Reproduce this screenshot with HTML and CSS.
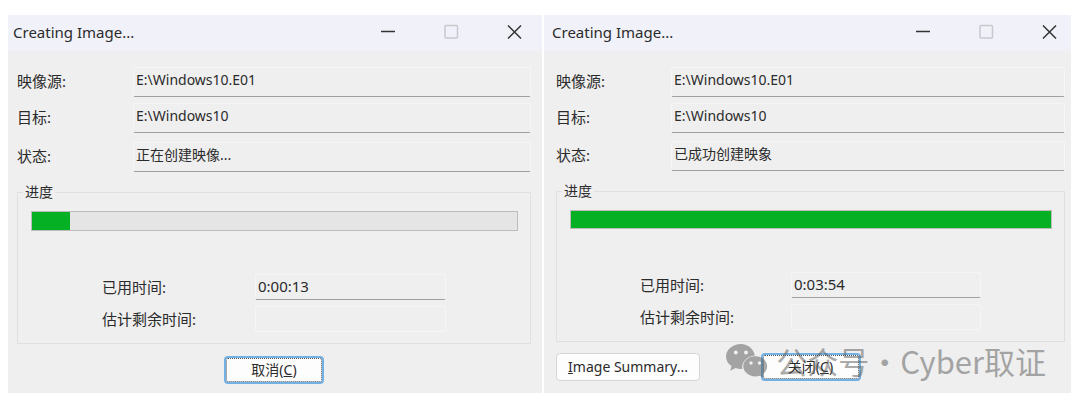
FILE: index.html
```html
<!DOCTYPE html>
<html lang="zh-CN">
<head>
<meta charset="utf-8">
<meta name="viewport" content="width=device-width, initial-scale=1">
<title>Creating Image...</title>
<link rel="stylesheet" href="styles.css">
</head>
<body>
<main class="desktop">
  <section class="window window-running">
    <header class="titlebar">
      <h1 class="title">Creating Image...</h1>
      <button class="control" type="button" aria-label="Minimize"><svg width="16" height="16" viewBox="0 0 16 16"><path d="M1 7.500H15" /></svg></button>
      <button class="control" type="button" aria-label="Maximize" disabled><svg width="16" height="16" viewBox="0 0 16 16"><rect x="2" y="1.500" width="12.500" height="12.500" rx="1" /></svg></button>
      <button class="control" type="button" aria-label="Close"><svg width="16" height="16" viewBox="0 0 16 16"><path d="M2 1.500L15 14.500M15 1.500L2 14.500" /></svg></button>
    </header>
    <form class="content">
      <div class="details">
        <label for="source-a">映像源:</label><input class="field" id="source-a" type="text" value="E:\Windows10.E01" readonly>
        <label for="target-a">目标:</label><input class="field" id="target-a" type="text" value="E:\Windows10" readonly>
        <label for="status-a">状态:</label><input class="field" id="status-a" type="text" value="正在创建映像..." readonly>
      </div>
      <fieldset class="group">
        <legend>进度</legend>
        <progress class="bar" value="78" max="1000" aria-label="进度"></progress>
        <div class="times">
          <label for="elapsed-a">已用时间:</label><input class="field time" id="elapsed-a" type="text" value="0:00:13" readonly>
          <label for="left-a">估计剩余时间:</label><input class="field time empty" id="left-a" type="text" value="" readonly>
        </div>
      </fieldset>
      <footer class="actions">
        <button class="push default" type="button">取消(<u>C</u>)</button>
      </footer>
    </form>
  </section>

  <section class="window window-done">
    <header class="titlebar">
      <h1 class="title">Creating Image...</h1>
      <button class="control" type="button" aria-label="Minimize"><svg width="16" height="16" viewBox="0 0 16 16"><path d="M1 7.500H15" /></svg></button>
      <button class="control" type="button" aria-label="Maximize" disabled><svg width="16" height="16" viewBox="0 0 16 16"><rect x="2" y="1.500" width="12.500" height="12.500" rx="1" /></svg></button>
      <button class="control" type="button" aria-label="Close"><svg width="16" height="16" viewBox="0 0 16 16"><path d="M2 1.500L15 14.500M15 1.500L2 14.500" /></svg></button>
    </header>
    <form class="content">
      <div class="details">
        <label for="source-b">映像源:</label><input class="field" id="source-b" type="text" value="E:\Windows10.E01" readonly>
        <label for="target-b">目标:</label><input class="field" id="target-b" type="text" value="E:\Windows10" readonly>
        <label for="status-b">状态:</label><input class="field" id="status-b" type="text" value="已成功创建映象" readonly>
      </div>
      <fieldset class="group">
        <legend>进度</legend>
        <progress class="bar" value="1000" max="1000" aria-label="进度"></progress>
        <div class="times">
          <label for="elapsed-b">已用时间:</label><input class="field time" id="elapsed-b" type="text" value="0:03:54" readonly>
          <label for="left-b">估计剩余时间:</label><input class="field time empty" id="left-b" type="text" value="" readonly>
        </div>
      </fieldset>
      <footer class="actions">
        <button class="push summary" type="button"><u>I</u>mage Summary...</button>
        <button class="push default" type="button">关闭(<u>C</u>)</button>
      </footer>
    </form>
    <div class="watermark">
      <svg class="chat" width="42" height="34" viewBox="0 0 42 34">
        <path fill-rule="evenodd" d="M15 0C6.700 0 0 5.600 0 12.500c0 3.900 2.100 7.300 5.500 9.600L4.300 26.800l5.300-2.800c1.700.600 3.500.900 5.400.900h1.300C15.300 18 21 12 28.800 11.400 27.700 5 22 0 15 0ZM9.800 6.500a2 2 0 1 1 0 4 2 2 0 0 1 0-4ZM20 6.500a2 2 0 1 1 0 4 2 2 0 0 1 0-4Z" />
        <path fill-rule="evenodd" d="M29.300 12.300C22.600 12.300 17.300 16.800 17.300 22.300S22.600 32.400 29.300 32.400c1.500 0 2.900-.200 4.200-.600l4.200 2-1-3.600c2.800-1.900 4.500-4.700 4.500-7.900 0-5.500-5.300-10-11.900-10ZM25 17.300a1.700 1.700 0 1 1 0 3.400 1.700 1.700 0 0 1 0-3.400ZM33.500 17.300a1.700 1.700 0 1 1 0 3.400 1.700 1.700 0 0 1 0-3.400Z" />
      </svg>
      <span>公众号</span><span class="dot">·</span><span>Cyber取证</span>
    </div>
  </section>
</main>
</body>
</html>
```
FILE: styles.css
```css
* {
  box-sizing: border-box;
}

body {
  margin: 0;
  background: #fff;
  color: #2b2b2b;
  font: 14px/20px "Noto Sans", "Noto Sans CJK SC", sans-serif;
}

.desktop {
  display: grid;
  grid-template-columns: 534fr 527fr;
  align-items: stretch;
  gap: 2px;
  padding: 15px 9px 13px 8px;
}

.window {
  position: relative;
  background: #efefef;
}

.window-running {
  --label-column: 116px;
  --edge-left: 9px;
  --edge-right: 11px;
  --controls-end: 7px;
  --status-row: 33px;
  --bar-height: 20px;
  --time-indent: 71px;
  --time-column: 153px;
  --time-width: 191px;
  --actions-gap: 12px;
}

.window-done {
  --label-column: 115px;
  --edge-left: 12px;
  --edge-right: 6px;
  --controls-end: 1px;
  --status-row: 32px;
  --bar-height: 19px;
  --time-indent: 70px;
  --time-column: 151px;
  --time-width: 190px;
  --actions-gap: 11px;
}

.titlebar {
  display: flex;
  align-items: center;
  gap: 21px;
  height: 36px;
  padding: 0 var(--controls-end) 2px 5px;
  background: #f1f2f9;
}

.window-done .titlebar {
  padding-left: 8px;
}

.title {
  flex: 1;
  margin: 0;
  font-size: 15px;
  font-weight: 400;
}

.control {
  display: grid;
  place-items: center;
  width: 42px;
  height: 32px;
  padding: 0;
  border: 0;
  background: none;
}

.control svg {
  fill: none;
  stroke: #333;
  stroke-width: 1.500;
}

.control:disabled svg {
  stroke: #c8c9cd;
}

.content {
  padding: 16px var(--edge-right) 9px var(--edge-left);
}

.details {
  display: grid;
  grid-template-columns: var(--label-column) 1fr;
  grid-template-rows: 30px 30px var(--status-row);
  align-items: end;
  row-gap: 6px;
}

.details label {
  padding-bottom: 6px;
}

.details label,
.times label {
  font-size: 15px;
}

.field {
  width: 100%;
  min-width: 0;
  height: 30px;
  padding: 0 2px 6px;
  border: 1px solid #f5f5f5;
  border-bottom: 1px solid #a0a0a0;
  border-radius: 2px;
  outline: 0;
  background: #efefef;
  color: inherit;
  font: inherit;
}

.group {
  min-width: 0;
  margin: 10px 0 0;
  padding: 9px 12px 11px 13px;
  border: 1px solid #e0e0e0;
}

.group legend {
  margin-left: -8px;
  padding: 0 2px;
}

.bar {
  display: block;
  width: 100%;
  height: var(--bar-height);
  border: 1px solid #bcbcbc;
  background: #e5e5e5;
  appearance: none;
}

.bar::-webkit-progress-bar {
  background: #e5e5e5;
}

.bar::-webkit-progress-value {
  background: #06b025;
}

.times {
  display: grid;
  grid-template-columns: var(--time-column) var(--time-width);
  align-items: center;
  row-gap: 6px;
  margin-top: 43px;
  padding-left: var(--time-indent);
}

.field.time {
  height: 26px;
  padding-bottom: 2px;
  font-size: 15px;
}

.field.empty {
  border-color: #f5f5f5;
}

.actions {
  display: grid;
  grid-template-columns: 1fr 100px 1fr;
  margin-top: var(--actions-gap);
}

.push {
  height: 28px;
  padding: 0;
  border: 1px solid #d6d6d6;
  border-radius: 4px;
  background: #fdfdfd;
  color: inherit;
  font: inherit;
}

.summary {
  width: 144px;
}

.default {
  grid-column: 2;
  border: 2px solid #72b1e3;
  outline: 1px dotted #555;
  outline-offset: -3px;
}

.watermark {
  position: absolute;
  right: 25px;
  bottom: 12px;
  display: flex;
  align-items: center;
  color: #5a5a5a;
  font: 31px/40px "Noto Sans CJK SC", sans-serif;
  opacity: 0.5;
  pointer-events: none;
}

.chat {
  margin-right: 8px;
  fill: currentColor;
}

.dot {
  width: 31px;
  padding-right: 5px;
  text-align: center;
}
```
